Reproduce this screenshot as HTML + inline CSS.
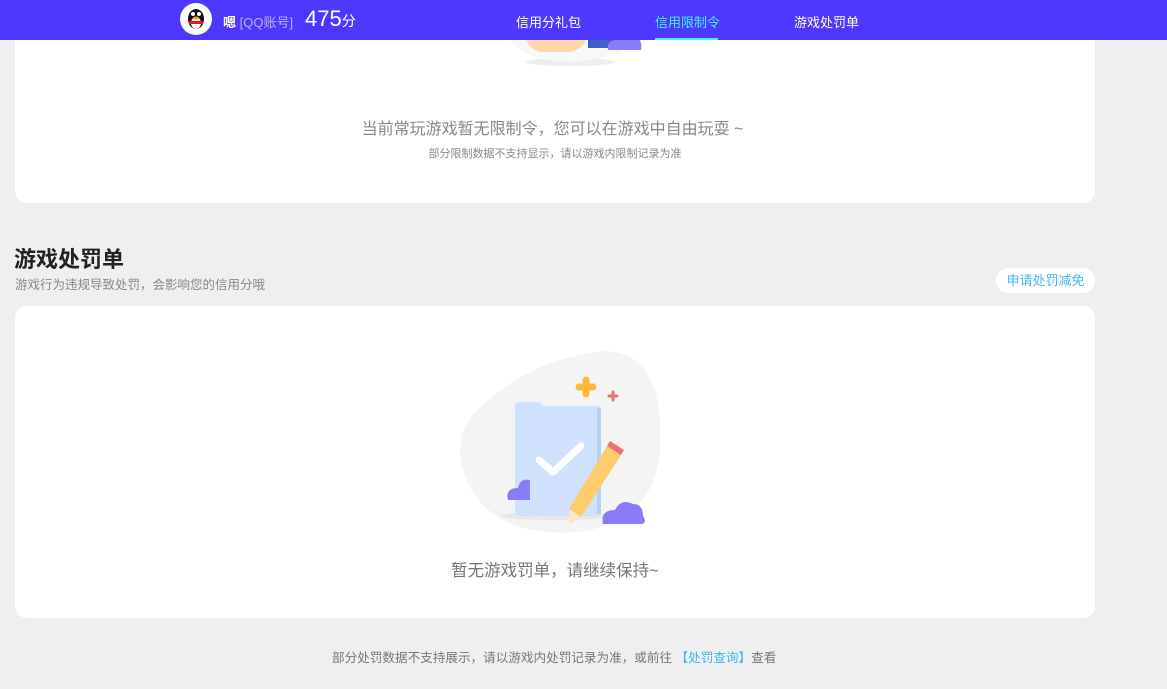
<!DOCTYPE html>
<html><head><meta charset="utf-8"><style>
*{margin:0;padding:0;box-sizing:border-box}
body{width:1167px;height:689px;overflow:hidden;background:#efefef;font-family:"Liberation Sans","Noto Sans CJK SC",sans-serif;position:relative}
.top{position:absolute;left:0;top:0;width:1167px;height:40px;background:#4f38fd;z-index:5;color:#fff}
.card{position:absolute;left:15px;width:1080px;background:#fff;border-radius:12px}
.abs{position:absolute}
</style></head><body>
<div class="card" style="top:-20px;height:223px">
 <svg class="abs" style="left:465px;top:20px" width="180" height="70">
  <ellipse cx="90" cy="62" rx="45" ry="4" fill="#eee"/>
  <path d="M20 0 Q15 60 90 62 Q155 60 170 20 L170 0Z" fill="#f8f8f8"/>
  <path d="M25 32 q0-8 10-6 q4-6 10 0 q6 2 2 10 h-24z" fill="#8a7cf9"/>
  <path d="M45 0 h60 v42 q-5 8 -15 10 h-30 q-15 -5 -15 -20z" fill="#fed7a5"/>
  <rect x="108" y="0" width="35" height="48" fill="#3f5fcf"/>
  <circle cx="128" cy="34" r="4" fill="#fff"/>
  <path d="M128 50 q-2-10 10-10 q5-10 15-4 q10 2 8 14z" fill="#8a7cf9"/>
 </svg>
 <div class="abs" style="left:0;width:1075px;top:135px;text-align:center;font-size:16px;color:#888">当前常玩游戏暂无限制令，您可以在游戏中自由玩耍 ~</div>
 <div class="abs" style="left:0;width:1080px;top:165px;text-align:center;font-size:11px;color:#888">部分限制数据不支持显示，请以游戏内限制记录为准</div>
</div>
<div class="top">
 <div class="abs" style="left:180px;top:3px;width:32px;height:32px;border-radius:50%;background:#fff;overflow:hidden">
  <svg width="32" height="32"><ellipse cx="16" cy="16" rx="8" ry="10" fill="#111"/><ellipse cx="16" cy="20" rx="5" ry="6" fill="#fff"/><circle cx="13" cy="11" r="2" fill="#fff"/><circle cx="19" cy="11" r="2" fill="#fff"/><path d="M9 18h14v3H9z" fill="#e12"/><ellipse cx="16" cy="15" rx="3" ry="1.5" fill="#f90"/></svg>
 </div>
 <div class="abs" style="left:223px;top:12px;font-size:13px"><b style="color:#fff">嗯</b> <span style="color:#b9b0ff">[QQ账号]</span></div>
 <div class="abs" style="left:305px;top:6px;font-size:22px">475<span style="font-size:14px">分</span></div>
 <div class="abs" style="left:516px;top:12px;font-size:13px">信用分礼包</div>
 <div class="abs" style="left:655px;top:12px;font-size:13px;color:#3ff0ff">信用限制令</div>
 <div class="abs" style="left:655px;top:38px;width:63px;height:2px;background:#3ff0ff"></div>
 <div class="abs" style="left:794px;top:12px;font-size:13px">游戏处罚单</div>
</div>
<div class="abs" style="left:14px;top:242px;font-size:22px;font-weight:bold;color:#222">游戏处罚单</div>
<div class="abs" style="left:15px;top:274px;font-size:12.5px;color:#888">游戏行为违规导致处罚，会影响您的信用分哦</div>
<div class="abs" style="left:996px;top:268px;width:99px;height:25px;border-radius:13px;background:#fff;color:#3bb7f5;font-size:13px;text-align:center;line-height:25px">申请处罚减免</div>
<div class="card" style="top:306px;height:312px">
 <svg class="abs" style="left:440px;top:42px" width="210" height="190">
  <path d="M30 55 Q80 10 150 3 Q210 5 205 100 Q200 180 110 185 Q20 185 5 110 Q3 75 30 55z" fill="#f4f4f4"/>
  <ellipse cx="100" cy="168" rx="55" ry="4" fill="#e8e8e8"/>
  <path d="M60 58 q0-4 4-4 h20 l4 4 h54 q4 0 4 4 v102 q0 4-4 4 H64 q-4 0-4-4z" fill="#cfe1fc"/>
  <rect x="142" y="60" width="4" height="106" fill="#b5cff5"/>
  <path d="M84 112 l14 12 l28-26" stroke="#fff" stroke-width="7" fill="none" stroke-linecap="round" stroke-linejoin="round"/>
  <path d="M131 46 v-14 M124 39 h14" stroke="#fdb93c" stroke-width="7" stroke-linecap="round"/>
  <path d="M158 52 v-8 M154 48 h8" stroke="#f46d6d" stroke-width="3" stroke-linecap="round"/>
  <path d="M53 152 q-3-12 10-12 q2-10 12-8 v20z" fill="#8a7cf9"/>
  <path d="M152 98 l14 9 l-40 62 l-12 6 l0 -14z" fill="#fecb6d"/>
  <path d="M152 98 l14 9 l3-5 l-14-9z" fill="#f46d6d"/>
  <path d="M114 161 l12 8 l-12 7z" fill="#fbe7c7"/>
  <path d="M148 176 q-3-14 12-14 q6-12 18-6 q10 0 10 12 q5 8-3 8 h-37z" fill="#8a7cf9"/>
 </svg>
 <div class="abs" style="left:0;width:1080px;top:251px;text-align:center;font-size:16.5px;color:#777">暂无游戏罚单，请继续保持~</div>
</div>
<div class="abs" style="left:332px;top:647px;font-size:12.6px;color:#777;white-space:nowrap">部分处罚数据不支持展示，请以游戏内处罚记录为准，或前往 <span style="color:#3bb7f5">【处罚查询】</span>查看</div>
</body></html>
